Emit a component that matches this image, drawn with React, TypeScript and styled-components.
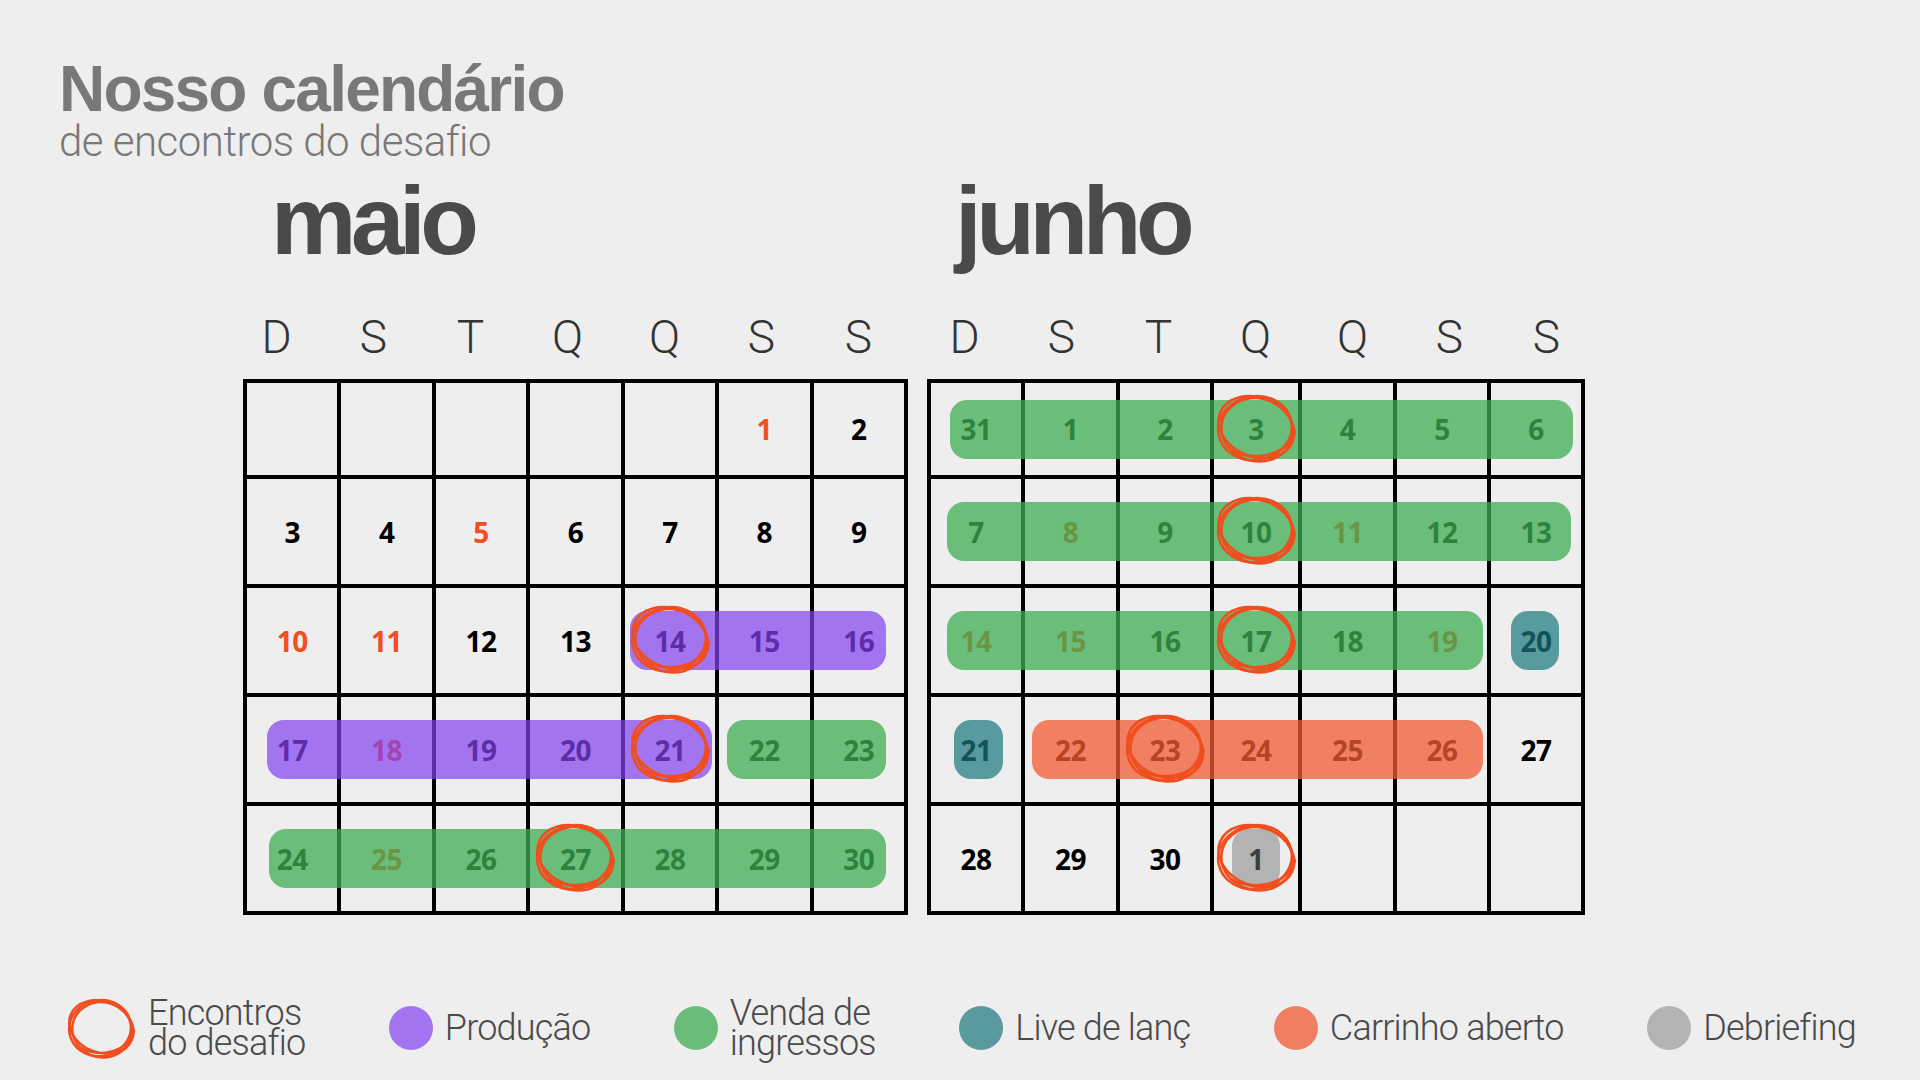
import React from "react";
import styled, { createGlobalStyle } from "styled-components";

const Global = createGlobalStyle`
  html, body { margin: 0; padding: 0; background: #eeeeee; }
  body { font-family: "Liberation Sans", Arial, sans-serif; }
`;

type Kind = "prod" | "venda" | "live" | "carrinho" | "debrief";

const BAR_COLORS: Record<Kind, string> = {
  prod: "rgba(131, 64, 241, 0.7)",
  venda: "rgba(62, 173, 81, 0.75)",
  live: "rgba(24, 118, 122, 0.7)",
  carrinho: "rgba(241, 90, 51, 0.75)",
  debrief: "rgba(120, 120, 120, 0.5)",
};

const Page = styled.div`
  width: 1920px;
  height: 1080px;
  box-sizing: border-box;
  padding-top: 57px;
  background: #eeeeee;
  overflow: hidden;
  display: flex;
  flex-direction: column;
`;

const Header = styled.header`
  margin-left: 59px;
  display: flex;
  flex-direction: column;
`;

const Title = styled.h1`
  margin: 0;
  font: 700 64px/64px "Liberation Sans", Arial, sans-serif;
  letter-spacing: -1.8px;
  color: #787878;
`;

const Subtitle = styled.p`
  margin: 0;
  font: 300 42px/42px Roboto, "Liberation Sans", sans-serif;
  letter-spacing: -0.5px;
  color: #787878;
`;

const Months = styled.section`
  display: flex;
  gap: 19px;
  padding-left: 243px;
  margin-top: 10px;
`;

const MonthColumn = styled.div`
  display: flex;
  flex-direction: column;
`;

const MonthName = styled.h2`
  margin: 0 0 0 28px;
  font: 700 96px/96px "Liberation Sans", Arial, sans-serif;
  letter-spacing: -5.4px;
  color: #4a4a4c;
`;

const WeekRow = styled.div<{ $shift: number }>`
  display: grid;
  grid-template-columns: repeat(7, 97px);
  margin: 45px 0 0 ${(p) => p.$shift}px;
  font: 300 46px/46px Roboto, "Liberation Sans", sans-serif;
  color: #333333;
  text-align: center;
`;

const CalendarGrid = styled.div<{ $cols: string; $width: number }>`
  margin-top: 19px;
  width: ${(p) => p.$width}px;
  box-sizing: border-box;
  display: grid;
  grid-template-columns: ${(p) => p.$cols};
  grid-template-rows: 92px repeat(4, 105px);
  gap: 4px;
  padding: 4px;
  background: #000000;
`;

const Cell = styled.div<{ $r: number; $c: number; $red: boolean }>`
  grid-row: ${(p) => p.$r};
  grid-column: ${(p) => p.$c};
  background: #eeeeee;
  display: flex;
  align-items: center;
  justify-content: center;
  font: 700 28px/1 "Open Sans", "Liberation Sans", sans-serif;
  letter-spacing: -0.5px;
  color: ${(p) => (p.$red ? "#f04e23" : "#000000")};
  z-index: 0;
`;

const Bar = styled.div<{ $r: number; $c1: number; $c2: number; $kind: Kind; $ml: number; $mr: number }>`
  grid-row: ${(p) => p.$r};
  grid-column: ${(p) => p.$c1} / ${(p) => p.$c2 + 1};
  align-self: center;
  height: 59px;
  margin-left: ${(p) => p.$ml}px;
  margin-right: ${(p) => p.$mr}px;
  border-radius: 17px;
  background: ${(p) => BAR_COLORS[p.$kind]};
  z-index: 1;
`;

const CircleSlot = styled.div<{ $r: number; $c: number }>`
  grid-row: ${(p) => p.$r};
  grid-column: ${(p) => p.$c};
  align-self: center;
  justify-self: center;
  width: 86px;
  height: 70px;
  margin-top: -3px;
  z-index: 2;
  pointer-events: none;
  display: flex;
`;

const Legend = styled.footer`
  display: flex;
  justify-content: space-between;
  align-items: center;
  margin: 82px 64px 0 64px;
`;

const LegendItem = styled.div<{ $gap?: number }>`
  display: flex;
  align-items: center;
  gap: ${(p) => p.$gap ?? 12}px;
`;

const Dot = styled.span<{ $color: string }>`
  width: 44px;
  height: 44px;
  border-radius: 50%;
  background: ${(p) => p.$color};
  flex: none;
`;

const LegendLabel = styled.span`
  font: 300 36px/30px Roboto, "Liberation Sans", sans-serif;
  letter-spacing: -0.8px;
  color: #4a4a4a;
`;

const Scribble: React.FC<{ w: number; h: number; sw?: number }> = ({ w, h, sw = 2.6 }) => {
  const cx = w / 2;
  const cy = h / 2;
  const rx = w / 2 - 3;
  const ry = h / 2 - 3;
  return (
    <svg width={w} height={h} viewBox={`0 0 ${w} ${h}`} fill="none" stroke="#f04e1e" strokeWidth={sw} strokeLinecap="round">
      <ellipse cx={cx - 1} cy={cy} rx={rx - 3} ry={ry} transform={`rotate(-10 ${cx} ${cy})`} />
      <ellipse cx={cx + 1.5} cy={cy + 1.5} rx={rx - 4} ry={ry - 0.5} transform={`rotate(12 ${cx} ${cy})`} />
      <ellipse cx={cx} cy={cy - 1} rx={rx - 1} ry={ry - 2.5} transform={`rotate(22 ${cx} ${cy})`} />
      <path
        d={`M ${cx - rx * 0.6} ${cy + ry * 0.7} C ${cx - rx * 0.1} ${cy + ry + 2}, ${cx + rx * 0.8} ${cy + ry * 0.9}, ${cx + rx - 1} ${cy + ry * 0.1}`}
      />
    </svg>
  );
};

type BarSpec = { r: number; c1: number; c2: number; kind: Kind; ml: number; mr: number };

type MonthSpec = {
  name: string;
  cols: string;
  width: number;
  headShift: number;
  days: (string | null)[][];
  bars: BarSpec[];
  circles: [number, number][];
};

const WEEK = ["D", "S", "T", "Q", "Q", "S", "S"];

const MONTHS: MonthSpec[] = [
  {
    name: "maio",
    cols: "repeat(7, 1fr)",
    width: 665,
    headShift: -15,
    days: [
      [null, null, null, null, null, "1*", "2"],
      ["3", "4", "5*", "6", "7", "8", "9"],
      ["10*", "11*", "12", "13", "14", "15", "16"],
      ["17", "18*", "19", "20", "21", "22", "23"],
      ["24", "25*", "26", "27", "28", "29", "30"],
    ],
    bars: [
      { r: 3, c1: 5, c2: 7, kind: "prod", ml: 5, mr: 18 },
      { r: 4, c1: 1, c2: 5, kind: "prod", ml: 20, mr: 3 },
      { r: 4, c1: 6, c2: 7, kind: "venda", ml: 8, mr: 18 },
      { r: 5, c1: 1, c2: 7, kind: "venda", ml: 22, mr: 18 },
    ],
    circles: [
      [3, 5],
      [4, 5],
      [5, 4],
    ],
  },
  {
    name: "junho",
    cols: "90px 91px 90px 84px 91px 90px 90px",
    width: 658,
    headShift: -11,
    days: [
      ["31", "1", "2", "3", "4", "5", "6"],
      ["7", "8*", "9", "10", "11*", "12", "13"],
      ["14*", "15*", "16", "17", "18", "19*", "20"],
      ["21", "22", "23", "24", "25", "26", "27"],
      ["28", "29", "30", "1", null, null, null],
    ],
    bars: [
      { r: 1, c1: 1, c2: 7, kind: "venda", ml: 19, mr: 8 },
      { r: 2, c1: 1, c2: 7, kind: "venda", ml: 16, mr: 10 },
      { r: 3, c1: 1, c2: 6, kind: "venda", ml: 16, mr: 4 },
      { r: 3, c1: 7, c2: 7, kind: "live", ml: 20, mr: 22 },
      { r: 4, c1: 1, c2: 1, kind: "live", ml: 23, mr: 18 },
      { r: 4, c1: 2, c2: 6, kind: "carrinho", ml: 7, mr: 4 },
      { r: 5, c1: 4, c2: 4, kind: "debrief", ml: 18, mr: 18 },
    ],
    circles: [
      [1, 4],
      [2, 4],
      [3, 4],
      [4, 3],
      [5, 4],
    ],
  },
];

const Month: React.FC<{ m: MonthSpec }> = ({ m }) => (
  <MonthColumn>
    <MonthName>{m.name}</MonthName>
    <WeekRow $shift={m.headShift}>
      {WEEK.map((d, i) => (
        <span key={i}>{d}</span>
      ))}
    </WeekRow>
    <CalendarGrid $cols={m.cols} $width={m.width}>
      {m.days.map((row, ri) =>
        row.map((d, ci) => (
          <Cell key={`c${ri}-${ci}`} $r={ri + 1} $c={ci + 1} $red={!!d && d.endsWith("*")}>
            {d ? d.replace("*", "") : ""}
          </Cell>
        ))
      )}
      {m.bars.map((b, i) => (
        <Bar key={`b${i}`} $r={b.r} $c1={b.c1} $c2={b.c2} $kind={b.kind} $ml={b.ml} $mr={b.mr} />
      ))}
      {m.circles.map(([r, c], i) => (
        <CircleSlot key={`o${i}`} $r={r} $c={c}>
          <Scribble w={86} h={70} />
        </CircleSlot>
      ))}
    </CalendarGrid>
  </MonthColumn>
);

const LEGEND: { color: string; label: React.ReactNode }[] = [
  { color: "#a374f0", label: "Produção" },
  {
    color: "#6abd78",
    label: (
      <>
        Venda de
        <br />
        ingressos
      </>
    ),
  },
  { color: "#589a9d", label: "Live de lanç" },
  { color: "#f07f62", label: "Carrinho aberto" },
  { color: "#b3b3b3", label: "Debriefing" },
];

export default function App() {
  return (
    <Page>
      <Global />
      <Header>
        <Title>Nosso calendário</Title>
        <Subtitle>de encontros do desafio</Subtitle>
      </Header>
      <Months>
        {MONTHS.map((m) => (
          <Month key={m.name} m={m} />
        ))}
      </Months>
      <Legend>
        <LegendItem $gap={10}>
          <Scribble w={74} h={62} sw={2.5} />
          <LegendLabel>
            Encontros
            <br />
            do desafio
          </LegendLabel>
        </LegendItem>
        {LEGEND.map((l, i) => (
          <LegendItem key={i}>
            <Dot $color={l.color} />
            <LegendLabel>{l.label}</LegendLabel>
          </LegendItem>
        ))}
      </Legend>
    </Page>
  );
}
